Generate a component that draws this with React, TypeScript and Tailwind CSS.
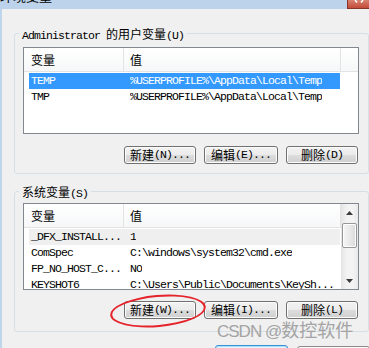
import React from "react";

// 系统字体近似：SimSun 半角 → Liberation Mono 压缩字距，全角 → Noto Sans CJK
const MONO = "font-['Liberation_Mono',monospace] text-[11.5px] tracking-[-0.9px]";
const CJK = "font-['Noto_Sans_CJK_SC',sans-serif] text-[12px]";

type Tone = "sel" | "dim" | "none";

interface RowData {
  name: string;
  value: string;
  tone?: Tone;
}

const TONE: Record<Tone, string> = {
  sel: "bg-[#3399ff] text-white",
  dim: "bg-[#efefef] text-black",
  none: "text-black",
};

function Row({ name, value, tone = "none" }: RowData) {
  return (
    <div className={`flex h-[16px] w-[311px] shrink-0 items-center whitespace-nowrap leading-[16px] ${MONO} ${TONE[tone]}`}>
      <span className="w-[101px] shrink-0 pl-[2px]">{name}</span>
      <span className="overflow-hidden">{value}</span>
    </div>
  );
}

function Arrow({ down }: { down?: boolean }) {
  return (
    <svg width="7" height="4" viewBox="0 0 7 4">
      <polygon points={down ? "0,0 7,0 3.5,4" : "3.5,0 7,4 0,4"} fill="#3a3a3a" />
    </svg>
  );
}

function ScrollBar() {
  return (
    <div className="flex w-[17px] shrink-0 flex-col bg-[linear-gradient(90deg,#e4e4e4,#f3f3f3_35%,#f3f3f3_70%,#e9e9e9)]">
      <div className="flex h-[17px] items-center justify-center">
        <Arrow />
      </div>
      <div className="mx-[1px] mt-[2px] h-[25px] rounded-[2px] border border-[#979797] bg-[linear-gradient(90deg,#f6f6f6,#e6e6e6_60%,#dadada)] shadow-[inset_0_0_0_1px_#fdfdfd]" />
      <div className="flex-1" />
      <div className="flex h-[17px] items-center justify-center">
        <Arrow down />
      </div>
    </div>
  );
}

function VarList({ rows, scroll }: { rows: RowData[]; scroll?: boolean }) {
  return (
    <div className="flex h-[87px] overflow-hidden border border-[#828790] bg-white">
      <div className="flex min-w-0 flex-1 flex-col">
        {/* 表头 */}
        <div className="flex h-[24px] shrink-0 border-b border-[#e3e3e3] bg-[linear-gradient(#ffffff,#f6f7f8)] text-black">
          <div className={`flex w-[100px] items-center border-r border-[#e3e3e3] pl-[7px] ${CJK}`}>变量</div>
          <div className={`flex w-[217px] items-center border-r border-[#e3e3e3] pl-[6px] ${CJK}`}>值</div>
          <div className="flex-1" />
        </div>
        <div className="flex flex-col pl-[5px] pt-[1px]">
          {rows.map((r) => (
            <Row key={r.name} {...r} />
          ))}
        </div>
      </div>
      {scroll && <ScrollBar />}
    </div>
  );
}

function Btn({ zh, hot, w }: { zh: string; hot: string; w: string }) {
  return (
    <button
      type="button"
      className={`flex h-[18px] shrink-0 items-center justify-center rounded-[3px] border border-[#707070] bg-[linear-gradient(#f2f2f2_0%,#ebebeb_50%,#dddddd_50%,#cfcfcf_100%)] text-black shadow-[inset_0_0_0_1px_#fcfcfc] ${w}`}
    >
      <span className={`leading-[16px] ${CJK}`}>{zh}</span>
      <span className={`leading-[16px] ${MONO}`}>{hot}</span>
    </button>
  );
}

export default function App() {
  const userRows: RowData[] = [
    { name: "TEMP", value: "%USERPROFILE%\\AppData\\Local\\Temp", tone: "sel" },
    { name: "TMP", value: "%USERPROFILE%\\AppData\\Local\\Temp" },
  ];
  const sysRows: RowData[] = [
    { name: "_DFX_INSTALL...", value: "1", tone: "dim" },
    { name: "ComSpec", value: "C:\\windows\\system32\\cmd.exe" },
    { name: "FP_NO_HOST_C...", value: "NO" },
    { name: "KEYSHOT6", value: "C:\\Users\\Public\\Documents\\KeySh..." },
  ];

  return (
    <div className="relative flex h-[348px] w-[369px] flex-col overflow-hidden bg-[#f0f0f0]">
      {/* 标题栏（上方被裁掉） */}
      <div className="flex h-[9px] shrink-0 items-start justify-between overflow-hidden bg-[#bcd3eb]">
        <span className="mt-[-11px] font-['Noto_Sans_CJK_SC',sans-serif] text-[13px] leading-[13px] text-black">
          环境变量
        </span>
        <div className="flex h-[9px] w-[22px] items-start justify-center border-b border-l border-[#8a3328] bg-[linear-gradient(#d9816f,#c24b39)]">
          <svg width="10" height="3" viewBox="0 0 10 3">
            <path d="M1 0 L3 2.5 M9 0 L7 2.5" stroke="#ffffff" strokeWidth="1.6" />
          </svg>
        </div>
      </div>

      <div className="flex flex-1">
        <div className="w-[2px] shrink-0 bg-[#bfd5ec]" />
        <div className="flex min-w-0 flex-1 flex-col pl-[12px] pt-[17px]">
          {/* 用户变量 */}
          <fieldset className="rounded-[3px] border border-[#d5dfe5] pb-[9px] pl-[8px] pr-[9px] pt-[7px]">
            <legend className="ml-[-4px] h-[14px] px-[3px] leading-[14px] text-black">
              <span className={MONO}>Administrator </span>
              <span className={CJK}>的用户变量</span>
              <span className={MONO}>(U)</span>
            </legend>
            <VarList rows={userRows} />
            <div className="mr-[1px] mt-[12px] flex justify-end gap-[8px]">
              <Btn zh="新建" hot="(N)..." w="w-[72px]" />
              <Btn zh="编辑" hot="(E)..." w="w-[74px]" />
              <Btn zh="删除" hot="(D)" w="w-[72px]" />
            </div>
          </fieldset>

          {/* 系统变量 */}
          <fieldset className="mt-[10px] rounded-[3px] border border-[#d5dfe5] pb-[12px] pl-[8px] pr-[9px] pt-[5px]">
            <legend className="ml-[-4px] h-[14px] px-[3px] leading-[14px] text-black">
              <span className={CJK}>系统变量</span>
              <span className={MONO}>(S)</span>
            </legend>
            <VarList rows={sysRows} scroll />
            <div className="mr-[1px] mt-[11px] flex justify-end gap-[8px]">
              <div className="relative">
                <Btn zh="新建" hot="(W)..." w="w-[72px]" />
                <div className="pointer-events-none absolute -bottom-[8px] -left-[14px] -right-[10px] -top-[6px] rotate-[-5deg] rounded-[50%] border-2 border-[#e5232b]" />
              </div>
              <Btn zh="编辑" hot="(I)..." w="w-[74px]" />
              <Btn zh="删除" hot="(L)" w="w-[72px]" />
            </div>
          </fieldset>

          {/* 确定 / 取消 按钮顶部 */}
          <div className="mt-[13px] flex gap-[9px] pl-[201px]">
            <div className="h-[22px] w-[73px] shrink-0 rounded-[3px] border border-[#3c8fd0] bg-[#e3f3fc] shadow-[inset_0_0_0_1px_#a6e2fb]" />
            <div className="mt-[1px] h-[22px] w-[73px] shrink-0 rounded-[3px] border border-[#8a8a8a] bg-[#f0f0f0] shadow-[inset_0_0_0_1px_#fcfcfc]" />
          </div>
        </div>
      </div>

      {/* CSDN 水印 */}
      <div className="pointer-events-none absolute left-[217px] top-[320px] flex items-baseline whitespace-nowrap leading-[18px] text-[#a4a4a4]">
        <span className="font-['Liberation_Sans',sans-serif] text-[17px] tracking-[-1px]">CSDN @</span>
        <span className="font-['Noto_Sans_CJK_SC',sans-serif] text-[18px]">数控软件</span>
      </div>
    </div>
  );
}
